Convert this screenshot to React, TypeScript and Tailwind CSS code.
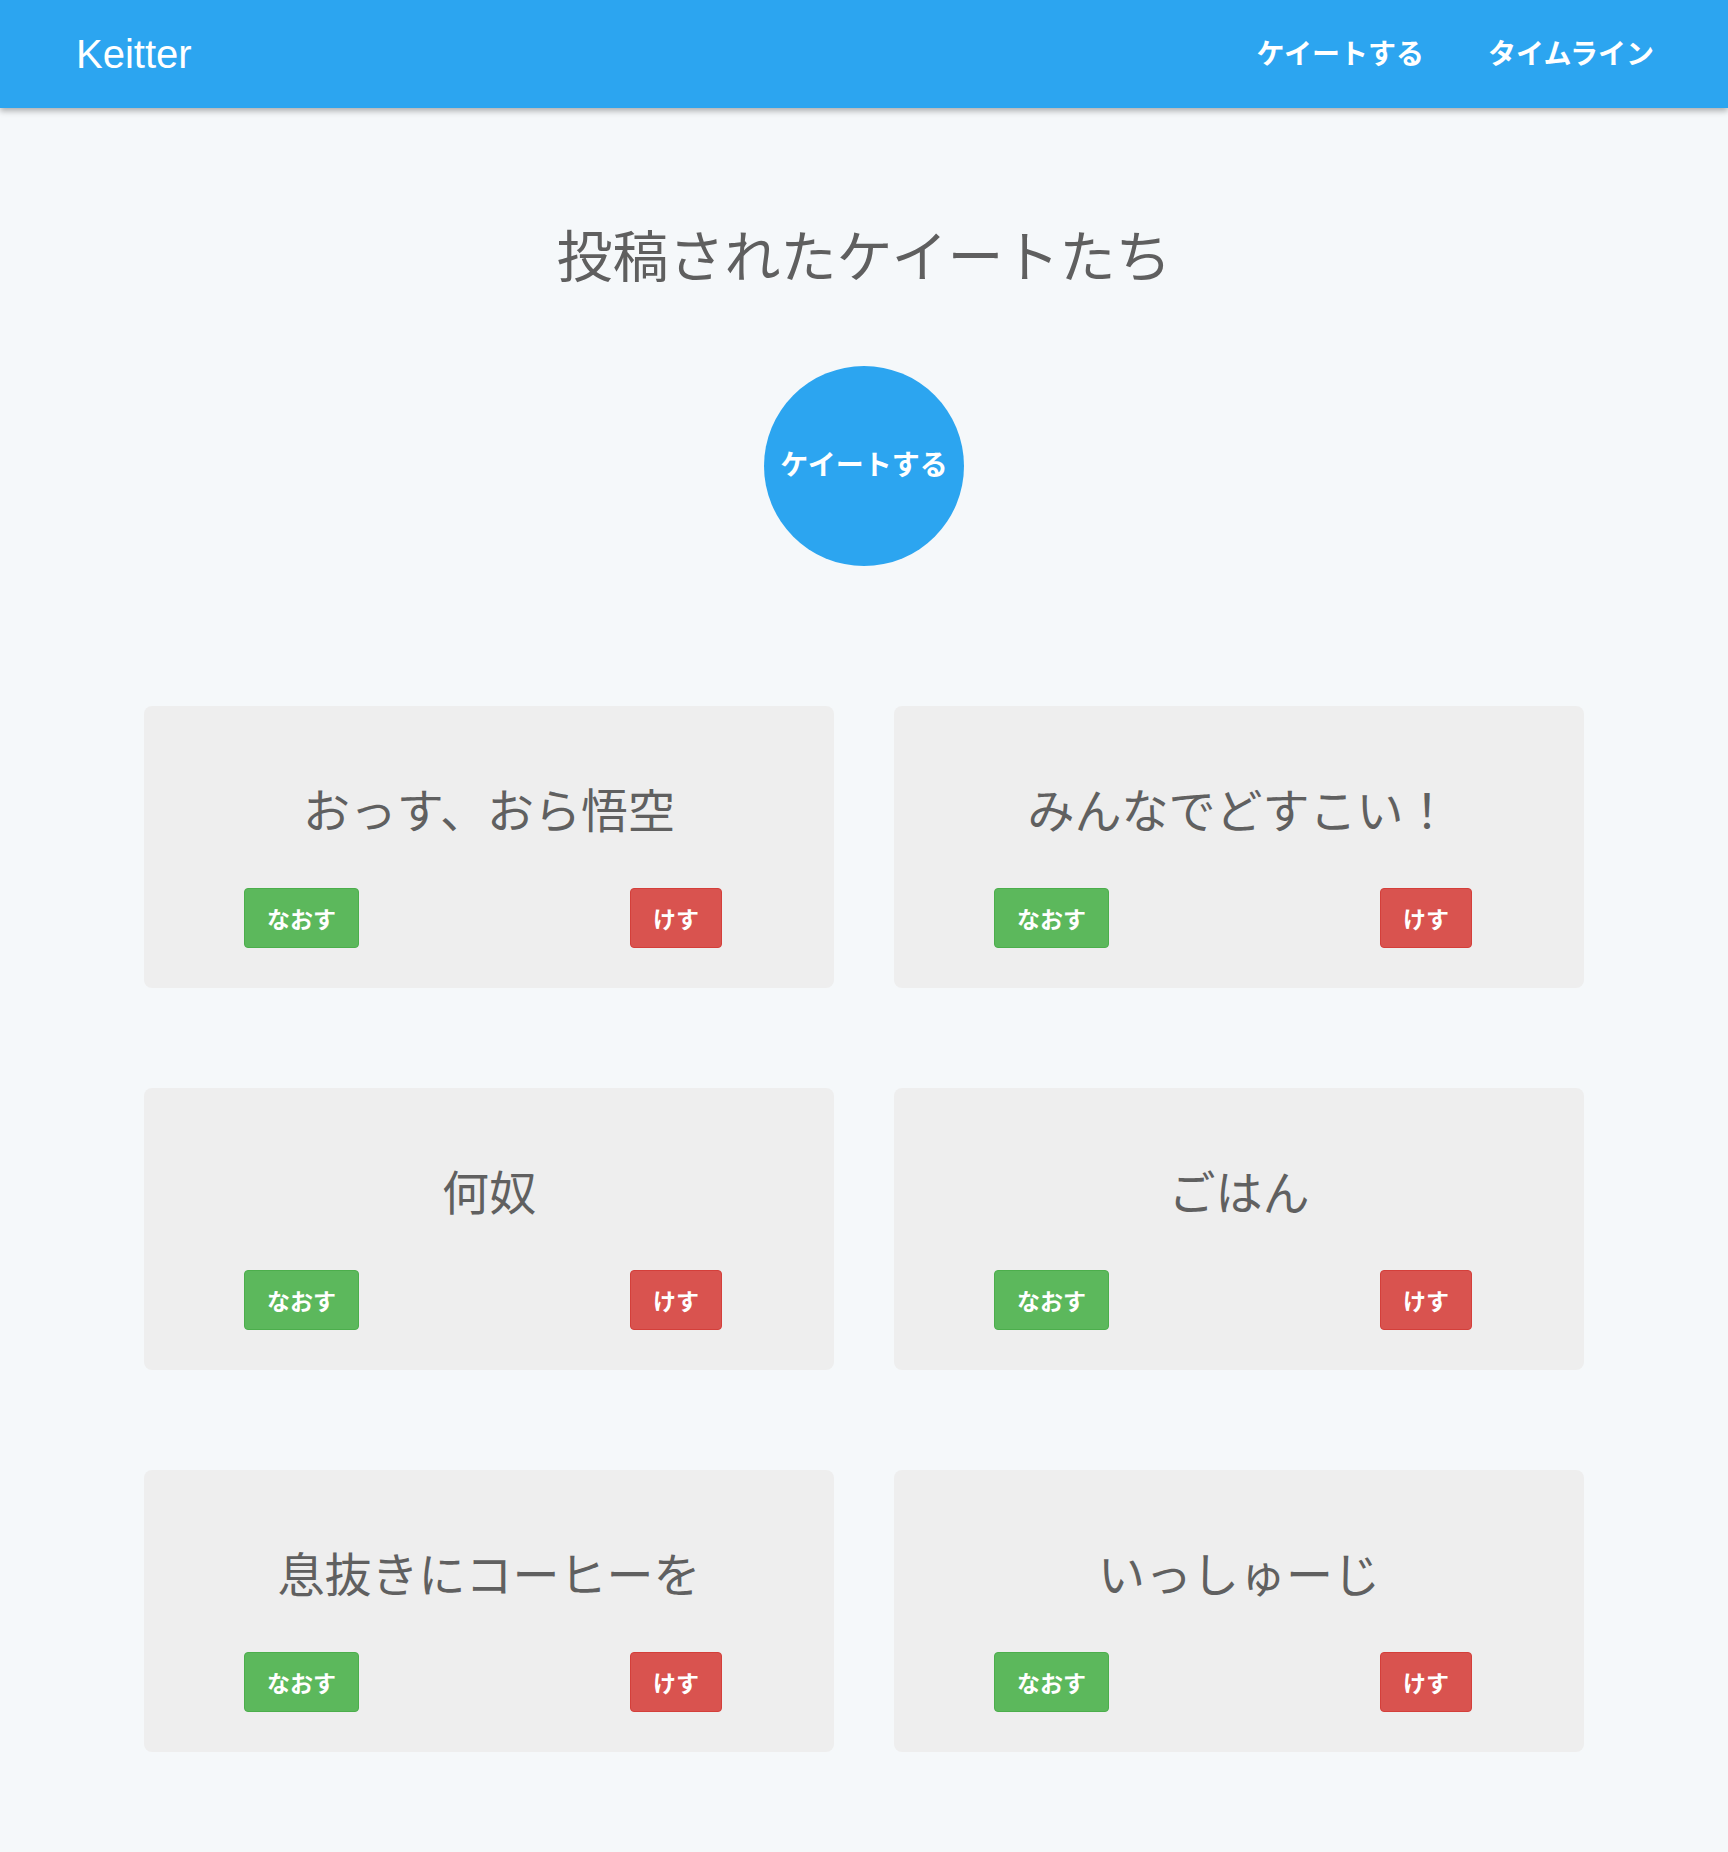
import React from "react";

const JP = "font-['Noto_Sans_CJK_JP','Noto_Sans',sans-serif]";

const posts = [
  "おっす、おら悟空",
  "みんなでどすこい！",
  "何奴",
  "ごはん",
  "息抜きにコーヒーを",
  "いっしゅーじ",
];

function Card({ text }: { text: string }) {
  return (
    <div className="flex h-[282px] flex-col rounded-[8px] bg-[#eeeeee] pt-[78px]">
      <p className={`${JP} text-center text-[47px] leading-[47px] text-[#606060]`}>{text}</p>
      <div className="mt-[57px] flex justify-between pl-[100px] pr-[112px]">
        <button
          className={`${JP} flex h-[60px] items-center justify-center rounded-[4px] border border-[#4cae4c] bg-[#5cb85c] px-[22px] text-[23px] font-bold leading-none text-white`}
        >
          なおす
        </button>
        <button
          className={`${JP} flex h-[60px] items-center justify-center rounded-[4px] border border-[#d43f3a] bg-[#d9534f] px-[22px] text-[23px] font-bold leading-none text-white`}
        >
          けす
        </button>
      </div>
    </div>
  );
}

export default function App() {
  return (
    <div className="min-h-[1852px] bg-[#f5f8fa]">
      <header className="relative z-10 flex h-[108px] items-center justify-between bg-[#2ca5f0] pl-[76px] pr-[74px] shadow-[0_3px_6px_rgba(0,0,0,0.3)]">
        <div className="font-['Liberation_Sans',Arial,sans-serif] text-[40px] leading-none text-white">Keitter</div>
        <nav className={`${JP} flex gap-[64px] pb-[4px] text-[28px] font-semibold leading-none text-white`}>
          <a>ケイートする</a>
          <a>タイムライン</a>
        </nav>
      </header>
      <main className="mx-auto flex w-[1440px] flex-col items-center pb-[100px] pt-[117px]">
        <h1 className={`${JP} text-[56px] font-normal leading-[56px] text-[#5f5f5f]`}>投稿されたケイートたち</h1>
        <button
          className={`${JP} mt-[85px] flex h-[200px] w-[200px] items-center justify-center rounded-full bg-[#2ca5f0] pb-[6px] text-[28px] font-semibold leading-none text-white`}
        >
          ケイートする
        </button>
        <div className="mt-[140px] grid w-full grid-cols-2 gap-x-[60px] gap-y-[100px]">
          {posts.map((p) => (
            <Card key={p} text={p} />
          ))}
        </div>
      </main>
    </div>
  );
}
